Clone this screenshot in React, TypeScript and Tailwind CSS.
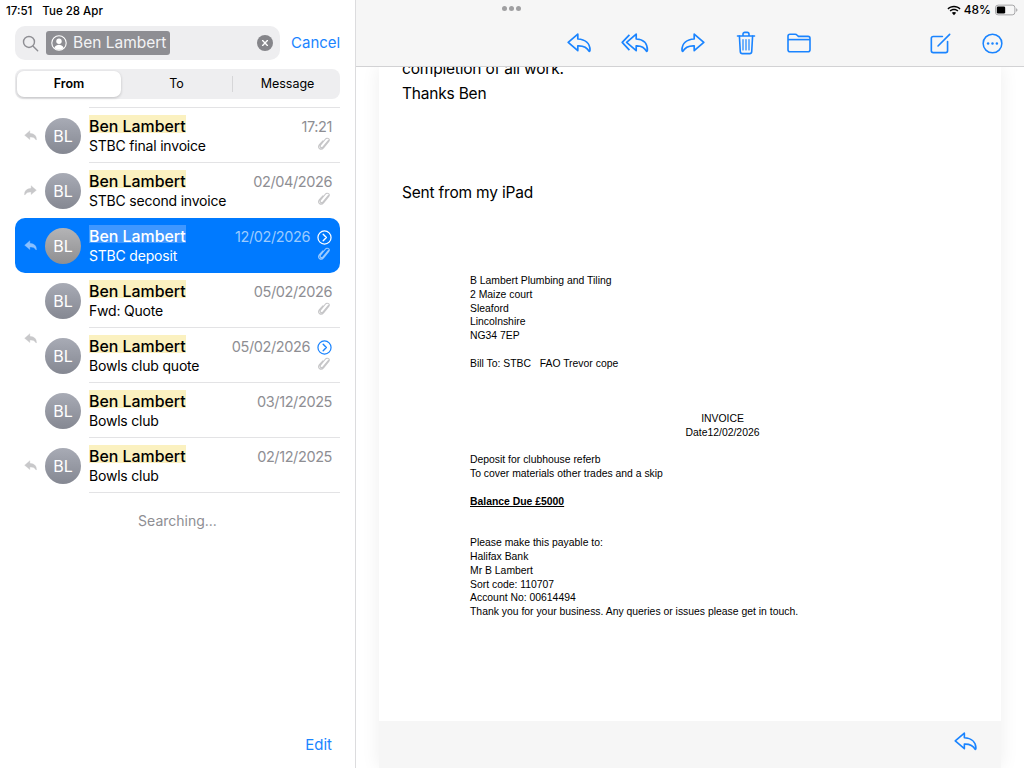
const font = "font-['Inter','Liberation_Sans',sans-serif]";
const A = "font-['Liberation_Sans',Arial,sans-serif]";

function Reply({ className = "", color = "currentColor", sw = 1.7, fill = "none", flip = false }: { className?: string; color?: string; sw?: number; fill?: string; flip?: boolean }) {
  return (
    <svg viewBox="0 0 24 20" className={className} style={flip ? { transform: "scaleX(-1)" } : undefined}>
      <path d="M10.800 1.200 1.200 9.400l9.600 8.200v-4.800c4.400-.2 8.800.6 11.400 5.600.6-.2.800-.6.800-1.200 0-6.800-4.800-10.800-12.200-11.200z" fill={fill} stroke={color} strokeWidth={sw} strokeLinejoin="round" />
    </svg>
  );
}

function ReplyAll() {
  return (
    <svg viewBox="0 0 28 20" className="w-[28px] h-[20px]" fill="none" stroke="#1a84ff" strokeWidth="1.700" strokeLinejoin="round">
      <path d="M8.400 1.800 1.200 9.400l7.200 7.800" />
      <path d="M15.200 1.200 5.600 9.400l9.600 8.200v-4.800c4.400-.2 7.800.6 10.400 5.600.6-.2.800-.6.800-1.200 0-6.800-3.800-10.800-11.200-11.200z" />
    </svg>
  );
}

function Trash() {
  return (
    <svg viewBox="0 0 20 24" className="w-[20px] h-[24px]" fill="none" stroke="#1a84ff" strokeWidth="1.600" strokeLinecap="round" strokeLinejoin="round">
      <path d="M1.500 5h17M7 5V3.200C7 2 7.800 1.400 8.800 1.400h2.400c1 0 1.800.6 1.800 1.800V5" />
      <path d="M3.400 5l.9 15.600c.1 1.200.9 2 2 2h7.400c1.100 0 1.900-.8 2-2L16.600 5" />
      <path d="M7 8.500v10.500M10 8.500v10.500M13 8.500v10.500" strokeWidth="1.200" />
    </svg>
  );
}

function Folder() {
  return (
    <svg viewBox="0 0 24 20" className="w-[24px] h-[20px]" fill="none" stroke="#1a84ff" strokeWidth="1.600" strokeLinejoin="round">
      <path d="M1 5V3.200C1 2 1.800 1.200 3 1.200h5.200c.9 0 1.400.3 2 1l1.200 1.200h9.600c1.300 0 2 .8 2 2v11.400c0 1.200-.7 2-2 2H3c-1.200 0-2-.8-2-2V5z" />
      <path d="M1 6.600h22" />
    </svg>
  );
}

function Compose() {
  return (
    <svg viewBox="0 0 22 22" className="w-[21px] h-[21px]" fill="none" stroke="#1a84ff" strokeWidth="1.700" strokeLinecap="round" strokeLinejoin="round">
      <path d="M13 3.600H3.400c-1.200 0-2 .8-2 2v13c0 1.200.8 2 2 2h13c1.200 0 2-.8 2-2V9" />
      <path d="M8.400 13.600 20.600 1.400" />
    </svg>
  );
}

function More() {
  return (
    <svg viewBox="0 0 22 22" className="w-[21px] h-[21px]">
      <circle cx="11" cy="11" r="9.800" fill="none" stroke="#1a84ff" strokeWidth="1.600" />
      <circle cx="6.400" cy="11" r="1.300" fill="#1a84ff" />
      <circle cx="11" cy="11" r="1.300" fill="#1a84ff" />
      <circle cx="15.600" cy="11" r="1.300" fill="#1a84ff" />
    </svg>
  );
}

function Clip({ color = "#c6c6c8" }: { color?: string }) {
  return (
    <svg viewBox="0 0 12 14" className="w-[12px] h-[13px]" fill="none" stroke={color} strokeWidth="1.200" strokeLinecap="round">
      <path d="M10.600 3.600 5 10.400c-.8 1-1.900 1-2.600.4-.7-.6-.7-1.600 0-2.500l5-6.100c1.200-1.400 2.700-1.300 3.500-.6.9.7 1 2 0 3.300l-5.200 6.300c-1.500 1.800-3.400 2-4.600 1-1-.9-1.200-2.400-.2-3.900L4.800 4" transform="translate(0 .2)" />
    </svg>
  );
}

function Chevron({ white }: { white?: boolean }) {
  const c = white ? "#ffffff" : "#1a84ff";
  return (
    <svg viewBox="0 0 16 16" className="w-[15px] h-[15px]" fill="none" stroke={c} strokeWidth="1.300" strokeLinecap="round" strokeLinejoin="round">
      <circle cx="8" cy="8" r="7" />
      <path d="M6.600 4.600 10 8l-3.400 3.400" strokeWidth="1.500" />
    </svg>
  );
}

type Row = { subject: string; date: string; left?: "reply" | "forward" | "replyHigh"; chevron?: boolean; clip?: boolean; selected?: boolean };

const rows: Row[] = [
  { subject: "STBC final invoice", date: "17:21", left: "reply", clip: true },
  { subject: "STBC second invoice", date: "02/04/2026", left: "forward", clip: true },
  { subject: "STBC deposit", date: "12/02/2026", left: "reply", clip: true, chevron: true, selected: true },
  { subject: "Fwd: Quote", date: "05/02/2026", clip: true },
  { subject: "Bowls club quote", date: "05/02/2026", left: "replyHigh", clip: true, chevron: true },
  { subject: "Bowls club", date: "03/12/2025" },
  { subject: "Bowls club", date: "02/12/2025", left: "reply" },
];

function MailRow({ r }: { r: Row }) {
  const sel = r.selected;
  const hideLine = sel || rows[rows.indexOf(r) + 1]?.selected;
  const iconColor = sel ? "#8ac0ff" : "#c8c8ca";
  return (
    <div className={`relative h-[55px] flex items-center pl-[9px] pr-[8px] ${sel ? "bg-[#007aff] rounded-[10px]" : ""}`}>
      <div className="w-[13px] shrink-0">
        {r.left === "reply" && <Reply className="w-[13px] h-[11px]" fill={iconColor} color={iconColor} sw={0.6} />}
        {r.left === "forward" && <Reply flip className="w-[13px] h-[11px]" fill={iconColor} color={iconColor} sw={0.6} />}
        {r.left === "replyHigh" && <Reply className="w-[13px] h-[11px] relative top-[-17px]" fill={iconColor} color={iconColor} sw={0.6} />}
      </div>
      <div className={`w-[36px] h-[36px] rounded-full shrink-0 ml-[8px] flex items-center justify-center bg-gradient-to-b text-white text-[16px] ${sel ? "from-[#b4b4b6] to-[#8f8f91]" : "from-[#a8abb5] to-[#858892]"}`}>
        BL
      </div>
      <div className="ml-[8px] flex-1 min-w-0 h-full flex flex-col pt-[7px]">
        <div className="flex items-start justify-between h-[18px]">
          <span className={`block h-[18px] text-[15.9px] leading-[24px] font-medium ${sel ? "bg-[#3f97ff] text-white" : "bg-[#fbf1c0] text-black"}`}>Ben Lambert</span>
          <span className="flex items-center gap-[7px] pt-[3px]">
            <span className={`text-[14.5px] leading-[18px] tracking-[-0.4px] ${sel ? "text-[#9bcbff]" : "text-[#8e8e93]"}`}>{r.date}</span>
            {r.chevron && <Chevron white={sel} />}
          </span>
        </div>
        <div className="flex items-start justify-between mt-[3px]">
          <span className={`text-[14px] leading-[20px] tracking-[-0.2px] ${sel ? "text-white" : "text-black"}`}>{r.subject}</span>
          {r.clip && <span className="mt-[1px] mr-[2px]"><Clip color={sel ? "#9bcbff" : "#c6c6c8"} /></span>}
        </div>
      </div>
      {!hideLine && <div className="absolute left-[74px] right-0 bottom-0 h-px bg-[#e3e3e5]" />}
    </div>
  );
}

function Sidebar() {
  return (
    <aside className={`relative z-20 w-[356px] h-full shrink-0 bg-white border-r border-[#dcdcde] flex flex-col ${font}`}>
      <div className="h-[26px] flex items-center pl-[6px] pb-[3px] text-[11.5px] font-medium text-black gap-[10px]">
        <span>17:51</span>
        <span>Tue 28 Apr</span>
      </div>
      <div className="pl-[15px] flex items-center">
        <div className="w-[265px] shrink-0 h-[34px] rounded-[10px] bg-[#eeeef0] flex items-center pl-[7px] pr-[7px]">
          <svg viewBox="0 0 18 18" className="w-[17px] h-[17px] shrink-0" fill="none" stroke="#8e8e93" strokeWidth="1.500" strokeLinecap="round">
            <circle cx="7.400" cy="7.400" r="5.800" />
            <path d="m11.800 11.800 4.800 4.800" />
          </svg>
          <div className="ml-[7px] h-[24px] w-[124px] shrink-0 rounded-[3px] bg-[#8e8e93] flex items-center pl-[5px] text-[15.5px]">
            <svg viewBox="0 0 16 16" className="w-[16px] h-[16px] shrink-0 mr-[6px]">
              <circle cx="8" cy="8" r="7.200" fill="none" stroke="#fff" strokeWidth="1.100" />
              <circle cx="8" cy="6.300" r="2.700" fill="#fff" />
              <path d="M3.400 12.800c1-2.200 2.800-3 4.600-3s3.600.8 4.600 3C11.400 14.200 9.800 14.800 8 14.800s-3.400-.6-4.600-2z" fill="#fff" />
            </svg>
            <span className="text-[#f3f3f5] whitespace-nowrap">Ben Lambert</span>
          </div>
          <div className="ml-auto w-[16px] h-[16px] rounded-full bg-[#85858a] flex items-center justify-center">
            <svg viewBox="0 0 10 10" className="w-[8px] h-[8px]" stroke="#fff" strokeWidth="1.700" strokeLinecap="round">
              <path d="m2 2 6 6M8 2 2 8" />
            </svg>
          </div>
        </div>
        <span className="ml-[11px] text-[#1a84ff] text-[15px]">Cancel</span>
      </div>
      <div className="mx-[15px] mt-[9px] h-[30px] rounded-[8px] bg-[#eeeef0] flex items-center p-[2px] text-[12.5px] text-black">
        <div className="w-[104px] h-full rounded-[7px] bg-white shadow-[0_1px_3px_rgba(0,0,0,0.2)] flex items-center justify-center font-semibold">From</div>
        <div className="flex-1 flex items-center justify-center">To</div>
        <div className="w-px h-[16px] bg-[#d6d6d8]" />
        <div className="w-[105px] pl-[4px] flex items-center justify-center">Message</div>
      </div>
      <div className="relative mt-[8px] mx-[15px]">
        <div className="h-px ml-[74px] bg-[#e3e3e5]" />
        <div className="flex flex-col">
          {rows.map((r, i) => (
            <MailRow key={i} r={r} />
          ))}
        </div>
      </div>
      <div className="mt-[17px] text-center text-[14px] text-[#8e8e93]">Searching...</div>
      <div className="mt-auto pb-[12px] pr-[23px] text-right text-[#1a84ff] text-[15px]">Edit</div>
    </aside>
  );
}

function Doc() {
  return (
    <div className={`${A} text-[10.4px] leading-[13.8px] text-black pl-[91px] pt-[70px]`}>
      <p>B Lambert Plumbing and Tiling</p>
      <p>2 Maize court</p>
      <p>Sleaford</p>
      <p>Lincolnshire</p>
      <p>NG34 7EP</p>
      <p className="mt-[13.8px]">Bill To: STBC &nbsp; FAO Trevor cope</p>
      <div className="mt-[41.4px] w-[505px] text-center">
        <p>INVOICE</p>
        <p>Date12/02/2026</p>
      </div>
      <p className="mt-[13.8px]">Deposit for clubhouse referb</p>
      <p>To cover materials other trades and a skip</p>
      <p className="mt-[13.8px] font-bold underline">Balance Due £5000</p>
      <p className="mt-[27.6px]">Please make this payable to:</p>
      <p>Halifax Bank</p>
      <p>Mr B Lambert</p>
      <p>Sort code: 110707</p>
      <p>Account No: 00614494</p>
      <p>Thank you for your business. Any queries or issues please get in touch.</p>
    </div>
  );
}

function Main() {
  return (
    <main className="flex-1 h-full flex flex-col bg-white min-w-0 overflow-hidden">
      <header className={`relative z-10 h-[67px] shrink-0 bg-[#f6f6f6] border-b border-[#d2d2d4] ${font}`}>
        <div className="absolute left-[146px] top-[6px] flex gap-[2px]">
          <span className="w-[5px] h-[5px] rounded-full bg-[#a0a0a2]" />
          <span className="w-[5px] h-[5px] rounded-full bg-[#a0a0a2]" />
          <span className="w-[5px] h-[5px] rounded-full bg-[#a0a0a2]" />
        </div>
        <div className="absolute right-[6px] top-[1px] flex items-center text-[12px] font-medium text-black">
          <svg viewBox="0 0 16 12" className="w-[14px] h-[11px] mr-[3px]" fill="#000">
            <path d="M8 2.200c2.500 0 4.700 1 6.400 2.600l1.100-1.200C13.500 1.700 10.900.5 8 .5S2.500 1.700.5 3.600l1.100 1.200C3.300 3.200 5.500 2.200 8 2.200z" />
            <path d="M8 5.700c1.500 0 2.800.6 3.900 1.500l1.100-1.200C11.600 4.700 9.900 4 8 4S4.400 4.700 3 6l1.100 1.200C5.200 6.300 6.500 5.700 8 5.700z" />
            <path d="M8 7.600c-1 0-1.800.4-2.500 1L8 11.300l2.500-2.700c-.7-.6-1.500-1-2.500-1z" />
          </svg>
          <span>48%</span>
          <svg viewBox="0 0 26 12" className="w-[23px] h-[12px] ml-[4px]">
            <rect x=".5" y=".5" width="22" height="11" rx="3" fill="none" stroke="#9a9a9c" />
            <rect x="2" y="2" width="9.500" height="8" rx="1.500" fill="#000" />
            <path d="M24 4v4c.8-.3 1.300-1 1.300-2s-.5-1.700-1.300-2z" fill="#9a9a9c" />
          </svg>
        </div>
        <div className="absolute top-[31px] left-0 right-0 h-[24px] flex items-center">
          <Reply className="w-[24px] h-[20px] absolute left-[211px]" color="#1a84ff" />
          <span className="absolute left-[265px]"><ReplyAll /></span>
          <Reply flip className="w-[24px] h-[20px] absolute left-[325px]" color="#1a84ff" />
          <span className="absolute left-[380px] top-0"><Trash /></span>
          <span className="absolute left-[431px]"><Folder /></span>
          <span className="absolute left-[574px]"><Compose /></span>
          <span className="absolute left-[626px]"><More /></span>
        </div>
      </header>
      <div className="flex-1 min-h-0 flex px-[23px]">
        <div className="flex-1 flex flex-col shadow-[0_0_18px_rgba(0,0,0,0.07)]">
          <div className="flex-1 min-h-0 bg-white overflow-hidden">
            <div className={`${font} text-[15.5px] leading-[24px] tracking-[-0.2px] text-black pl-[23px]`}>
              <p className="mt-[-10px] h-[24px]">completion of all work.</p>
              <p className="mt-[1px]">Thanks Ben</p>
              <p className="mt-[75px]">Sent from my iPad</p>
            </div>
            <div className="mt-[-1px]"><Doc /></div>
          </div>
          <div className="h-[47px] shrink-0 bg-[#f6f6f6] flex items-center justify-end pr-[24px]">
            <Reply className="w-[23px] h-[19px] relative top-[-3px]" color="#1a84ff" />
          </div>
        </div>
      </div>
    </main>
  );
}

export default function App() {
  return (
    <div className="w-[1024px] h-[768px] flex overflow-hidden bg-white">
      <Sidebar />
      <Main />
    </div>
  );
}
